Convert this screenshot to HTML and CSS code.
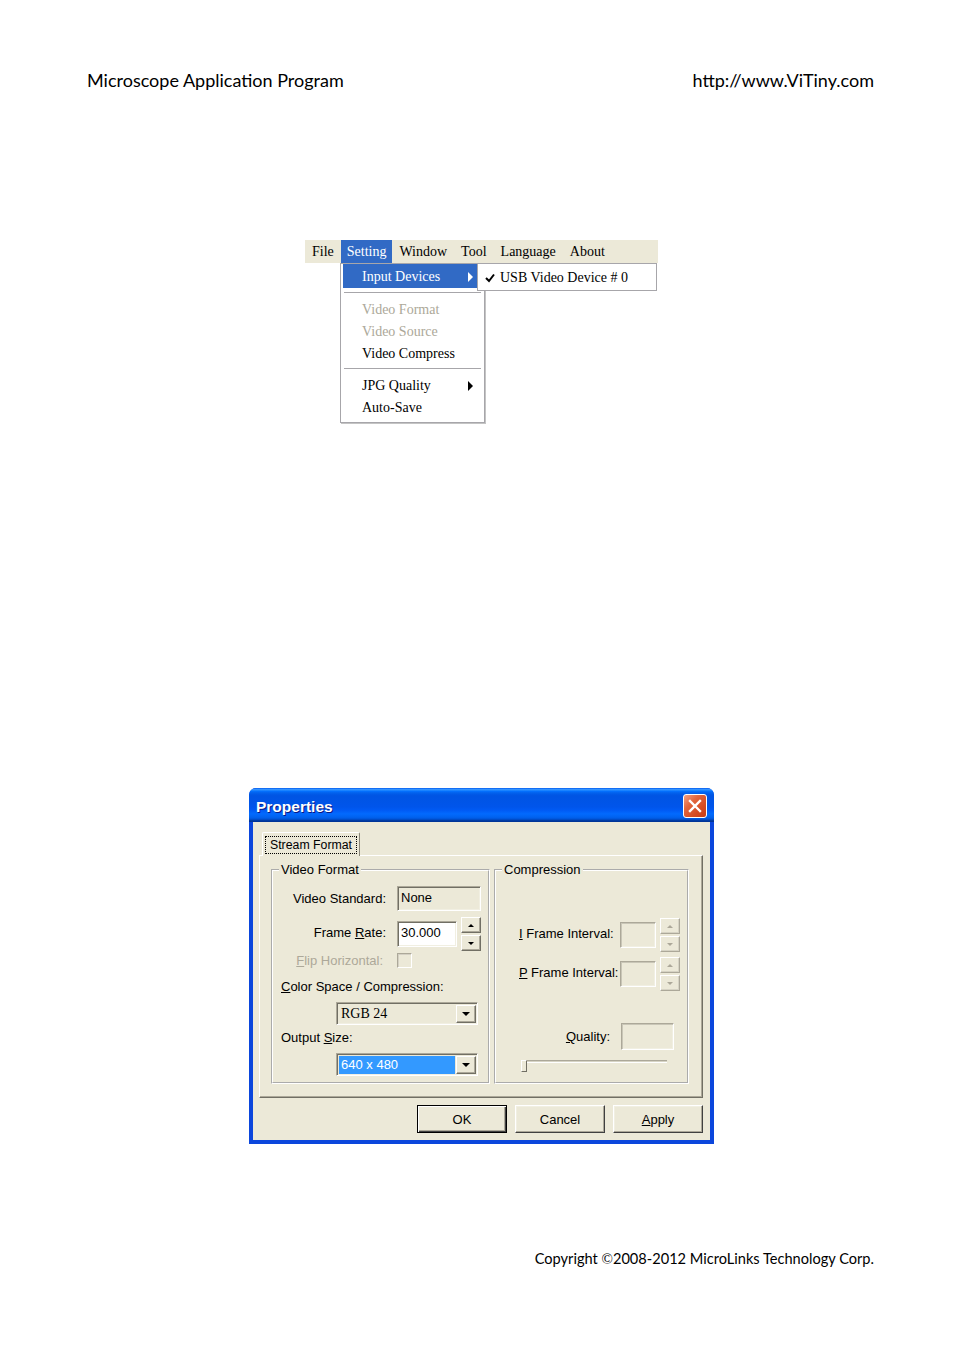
FILE: index.html
```html
<!DOCTYPE html>
<html>
<head>
<meta charset="utf-8">
<title>Microscope Application Program</title>
<link rel="stylesheet" href="styles.css">
</head>
<body>
<div class="page">
  <header class="doc-header">
    <span>Microscope Application Program</span>
    <span>http://www.ViTiny.com</span>
  </header>

  <div class="menu-shot">
    <div class="menubar">
      <span class="mb-item">File</span>
      <span class="mb-item active">Setting</span>
      <span class="mb-item">Window</span>
      <span class="mb-item">Tool</span>
      <span class="mb-item">Language</span>
      <span class="mb-item">About</span>
    </div>
    <div class="dropdown">
      <div class="dd-item hl"><span>Input Devices</span><span class="arrow"></span></div>
      <div class="dd-sep"></div>
      <div class="dd-item disabled"><span>Video Format</span></div>
      <div class="dd-item disabled"><span>Video Source</span></div>
      <div class="dd-item"><span>Video Compress</span></div>
      <div class="dd-sep"></div>
      <div class="dd-item"><span>JPG Quality</span><span class="arrow"></span></div>
      <div class="dd-item"><span>Auto-Save</span></div>
      <div class="submenu">
        <svg class="check" width="10" height="10" viewBox="0 0 10 10"><path d="M1 5 L4 8 L9 1.5" fill="none" stroke="#000" stroke-width="2"/></svg>
        <span>USB Video Device # 0</span>
      </div>
    </div>
  </div>

  <div class="dialog">
    <div class="titlebar">
      <span class="title">Properties</span>
      <span class="close"><svg width="14" height="14" viewBox="0 0 14 14"><path d="M2 2 L12 12 M12 2 L2 12" stroke="#fff" stroke-width="2.4" stroke-linecap="square"/></svg></span>
    </div>
    <div class="dlg-body">
      <div class="tabs">
        <div class="tab"><span class="tab-label">Stream Format</span></div>
      </div>
      <div class="tab-panel">
        <fieldset class="group group-video">
          <legend>Video Format</legend>
          <div class="row row-std">
            <span class="lbl">Video Standard:</span>
            <span class="field ro w84">None</span>
          </div>
          <div class="row row-rate">
            <span class="lbl">Frame <u>R</u>ate:</span>
            <span class="field edit w60">30.000</span>
            <span class="spin">
              <span class="sb"><span class="tri-up"></span></span>
              <span class="sb"><span class="tri-down"></span></span>
            </span>
          </div>
          <div class="row row-flip">
            <span class="lbl disabled flip"><u>F</u>lip Horizontal:</span>
            <span class="check-box"></span>
          </div>
          <div class="caption cap-color"><u>C</u>olor Space / Compression:</div>
          <div class="combo combo-rgb">
            <span class="combo-text serif">RGB 24</span>
            <span class="combo-btn"><span class="tri-down big"></span></span>
          </div>
          <div class="caption cap-size">Output <u>S</u>ize:</div>
          <div class="combo combo-size">
            <span class="combo-text sel">640 x 480</span>
            <span class="combo-btn"><span class="tri-down big"></span></span>
          </div>
        </fieldset>
        <fieldset class="group group-comp">
          <legend>Compression</legend>
          <div class="row crow row-i">
            <span class="clbl"><u>I</u> Frame Interval:</span>
            <span class="field ro dis w36"></span>
            <span class="spin dis">
              <span class="sb"><span class="tri-up"></span></span>
              <span class="sb"><span class="tri-down"></span></span>
            </span>
          </div>
          <div class="row crow row-p">
            <span class="clbl"><u>P</u> Frame Interval:</span>
            <span class="field ro dis w36"></span>
            <span class="spin dis">
              <span class="sb"><span class="tri-up"></span></span>
              <span class="sb"><span class="tri-down"></span></span>
            </span>
          </div>
          <div class="row crow row-q">
            <span class="qlbl"><u>Q</u>uality:</span>
            <span class="field ro dis w53"></span>
          </div>
          <div class="slider">
            <div class="track"></div>
            <div class="thumb"></div>
          </div>
        </fieldset>
      </div>
      <div class="buttons">
        <span class="btn default">OK</span>
        <span class="btn">Cancel</span>
        <span class="btn"><u>A</u>pply</span>
      </div>
    </div>
  </div>

  <footer class="doc-footer">Copyright <span class="copy">©</span>2008-2012 MicroLinks Technology Corp.</footer>
</div>
</body>
</html>
```

FILE: styles.css
```css
* { box-sizing: border-box; }

body {
  margin: 0;
  background: #fff;
  color: #000;
  font-family: "Lato", "Open Sans", sans-serif;
}

.page {
  width: 954px;
  padding-top: 70px;
}

/* ---------- document header / footer ---------- */
.doc-header {
  display: flex;
  justify-content: space-between;
  padding: 0 80px 0 87px;
  height: 20px;
  line-height: 20px;
  font-size: 18px;
}

.doc-footer {
  margin-top: 105px;
  padding-right: 80px;
  text-align: right;
  height: 20px;
  line-height: 20px;
  font-size: 14.6px;
}
.copy { font-family: "Liberation Serif", serif; font-size: 15px; }

/* ---------- menu screenshot ---------- */
.menu-shot {
  position: relative;
  margin: 150px 0 0 305px;
  width: 353px;
  height: 184px;
  font-family: "Liberation Serif", serif;
  font-size: 14px;
}

.menubar {
  display: flex;
  height: 23px;
  line-height: 23px;
  background: #ece9d8;
}

.mb-item { padding: 0 7px; }
.mb-item.active {
  padding: 0 6px;
  background: #316ac5;
  color: #fff;
}

.dropdown {
  position: absolute;
  left: 35px;
  top: 23px;
  width: 145px;
  background: #fff;
  border: 1px solid #a7a6aa;
  box-shadow: 1px 1px 0 #c4c4c4;
  padding: 0 2px 4px;
}

.dd-item {
  display: flex;
  align-items: center;
  justify-content: space-between;
  height: 22px;
  padding: 2px 9px 0 19px;
}
.dd-item.hl {
  height: 24px;
  background: #316ac5;
  color: #fff;
}
.dd-item.disabled { color: #aca899; }

.arrow {
  width: 0;
  height: 0;
  border-left: 5px solid currentColor;
  border-top: 5px solid transparent;
  border-bottom: 5px solid transparent;
}

.dd-sep {
  margin: 4px 1px;
  border-top: 1px solid #a7a6aa;
  border-bottom: 1px solid #fff;
}

.submenu {
  position: absolute;
  left: 136px;
  top: -1px;
  width: 180px;
  height: 28px;
  display: flex;
  align-items: center;
  gap: 5px;
  padding: 2px 0 0 7px;
  background: #fff;
  border: 1px solid #a7a6aa;
}

/* ---------- dialog ---------- */
.dialog {
  margin: 364px 0 0 249px;
  width: 465px;
  background: #0b46dc;
  border-radius: 7px 7px 0 0;
  overflow: hidden;
  font-family: "Liberation Sans", Arial, sans-serif;
  font-size: 13px;
}

.titlebar {
  height: 34px;
  display: flex;
  align-items: center;
  justify-content: space-between;
  padding: 0 7px;
  background: linear-gradient(to bottom, #0058ee 0%, #3593ff 4%, #288eff 6%, #127dff 8%, #036ffc 10%, #0262ee 14%, #0057e5 20%, #0054e3 24%, #0055eb 56%, #005bf5 66%, #026afe 76%, #0062ef 86%, #0052d6 92%, #0040ab 94%, #003092 100%);
}

.title {
  margin-top: 3px;
  color: #fff;
  font-weight: bold;
  font-size: 15.5px;
  text-shadow: 1px 1px 0 #0a1883;
}

.close {
  margin-top: 2px;
  width: 24px;
  height: 24px;
  border: 1px solid #fff;
  border-radius: 3px;
  background: linear-gradient(135deg, #f3a184 0%, #e1653d 35%, #d54b22 70%, #c43d19 100%);
  display: flex;
  align-items: center;
  justify-content: center;
}

.dlg-body {
  margin: 0 4px 4px;
  background: #ece9d8;
  padding: 10px 7px 7px 6px;
}

.tabs {
  display: flex;
  height: 23px;
  padding-left: 3px;
}

.tab {
  position: relative;
  z-index: 1;
  width: 98px;
  height: 24px;
  background: #ece9d8;
  border: 1px solid #fff;
  border-right-color: #8a877a;
  border-bottom: none;
  border-radius: 2px 2px 0 0;
  display: flex;
  align-items: center;
  justify-content: center;
}

.tab-label {
  width: 92px;
  height: 18px;
  line-height: 16px;
  border: 1px dotted #000;
  text-align: center;
  font-size: 12.3px;
}

.tab-panel {
  height: 243px;
  display: flex;
  gap: 4px;
  padding: 6px 13px 0 11px;
  border: 1px solid;
  border-color: #fff #716f64 #716f64 #fff;
  box-shadow: inset -1px -1px 0 #aca899;
}

.group {
  margin: 0;
  padding: 0;
  min-width: 0;
  height: 222px;
  border: 2px groove #fff;
}
.group-video { width: 219px; }
.group-comp { width: 195px; }

.group legend {
  margin-left: 6px;
  padding: 0 2px;
  line-height: 16px;
}

.row {
  display: flex;
  align-items: center;
}

.lbl {
  width: 113px;
  margin-right: 11px;
  text-align: right;
  white-space: nowrap;
}
.lbl.flip { width: 110px; margin-right: 14px; }
.disabled { color: #aca899; }

.row-std { margin-top: 8px; height: 25px; }
.row-rate { margin-top: 6px; height: 34px; }
.row-rate .lbl { margin-bottom: 3px; }
.row-flip { margin-top: 2px; height: 15px; }

.field {
  display: block;
  height: 26px;
  line-height: 22px;
  padding-left: 3px;
  border: 1px solid;
  border-color: #aca899 #fff #fff #aca899;
  box-shadow: inset 1px 1px 0 #716f64, inset -1px -1px 0 #f1efe2;
  background: #ece9d8;
}
.field.edit { background: #fff; }
.row-std .field { height: 25px; }
.field.dis { box-shadow: inset 1px 1px 0 #c9c6b7, inset -1px -1px 0 #f1efe2; }
.w84 { width: 84px; }
.w60 { width: 60px; }
.w36 { width: 36px; }
.w53 { width: 53px; height: 27px; }

.spin {
  margin-left: 4px;
  display: flex;
  flex-direction: column;
  gap: 2px;
}

.sb {
  width: 20px;
  height: 16px;
  background: #ece9d8;
  border: 1px solid;
  border-color: #fff #716f64 #716f64 #fff;
  box-shadow: inset -1px -1px 0 #aca899;
  display: flex;
  align-items: center;
  justify-content: center;
}
.spin.dis .sb {
  border-color: #fff #aca899 #aca899 #fff;
  box-shadow: inset -1px -1px 0 #d6d3c4;
  color: #aca899;
}

.tri-up, .tri-down {
  width: 0;
  height: 0;
  border-left: 3px solid transparent;
  border-right: 3px solid transparent;
}
.tri-up { border-bottom: 3px solid currentColor; }
.tri-down { border-top: 3px solid currentColor; }
.tri-down.big {
  border-left-width: 4px;
  border-right-width: 4px;
  border-top-width: 4px;
}

.check-box {
  width: 15px;
  height: 15px;
  border: 1px solid;
  border-color: #aca899 #fff #fff #aca899;
  box-shadow: inset 1px 1px 0 #d4d0c4;
}

.caption {
  padding-left: 8px;
  line-height: 16px;
}
.cap-color { margin-top: 11px; }
.cap-size { margin-top: 5px; }

.combo {
  display: flex;
  margin: 7px 0 0 63px;
  width: 142px;
  height: 23px;
  padding: 2px 1px 1px 2px;
  border: 1px solid;
  border-color: #aca899 #fff #fff #aca899;
  box-shadow: inset 1px 1px 0 #716f64, inset -1px -1px 0 #f1efe2;
}

.combo-text {
  flex: 1;
  margin-right: 1px;
  padding-left: 2px;
  line-height: 18px;
}
.combo-text.serif {
  font-family: "Liberation Serif", serif;
  font-size: 14px;
}
.combo-text.sel {
  background: #3399ff;
  color: #fff;
}

.combo-btn {
  width: 20px;
  height: 18px;
  background: #ece9d8;
  border: 1px solid;
  border-color: #fff #716f64 #716f64 #fff;
  box-shadow: inset -1px -1px 0 #aca899;
  display: flex;
  align-items: center;
  justify-content: center;
}

/* compression group */
.crow { padding-left: 23px; }
.clbl { width: 101px; white-space: nowrap; margin-bottom: 4px; }
.qlbl { width: 91px; margin-right: 11px; text-align: right; }
.row-i { margin-top: 40px; height: 34px; }
.row-p { margin-top: 5px; height: 34px; }
.row-q { margin-top: 32px; height: 27px; }

.slider {
  position: relative;
  margin: 10px 0 0 25px;
  width: 146px;
  height: 12px;
}
.track {
  margin-top: 5px;
  height: 3px;
  border-top: 1px solid #aca899;
  border-bottom: 1px solid #fff;
  background: #d6d3c4;
}
.thumb {
  position: absolute;
  left: 0;
  top: 0;
  width: 6px;
  height: 12px;
  background: #ece9d8;
  border: 1px solid;
  border-color: #fff #716f64 #716f64 #fff;
}

/* buttons */
.buttons {
  display: flex;
  justify-content: flex-end;
  gap: 8px;
  margin-top: 7px;
}

.btn {
  width: 90px;
  height: 28px;
  display: flex;
  align-items: center;
  justify-content: center;
  background: #ece9d8;
  border: 1px solid;
  border-color: #fff #404040 #404040 #fff;
  box-shadow: inset -1px -1px 0 #aca899, inset 1px 1px 0 #f1efe2;
}
.btn.default {
  border-color: #000;
  box-shadow: inset 1px 1px 0 #fff, inset -1px -1px 0 #404040, inset -2px -2px 0 #aca899;
}
```
